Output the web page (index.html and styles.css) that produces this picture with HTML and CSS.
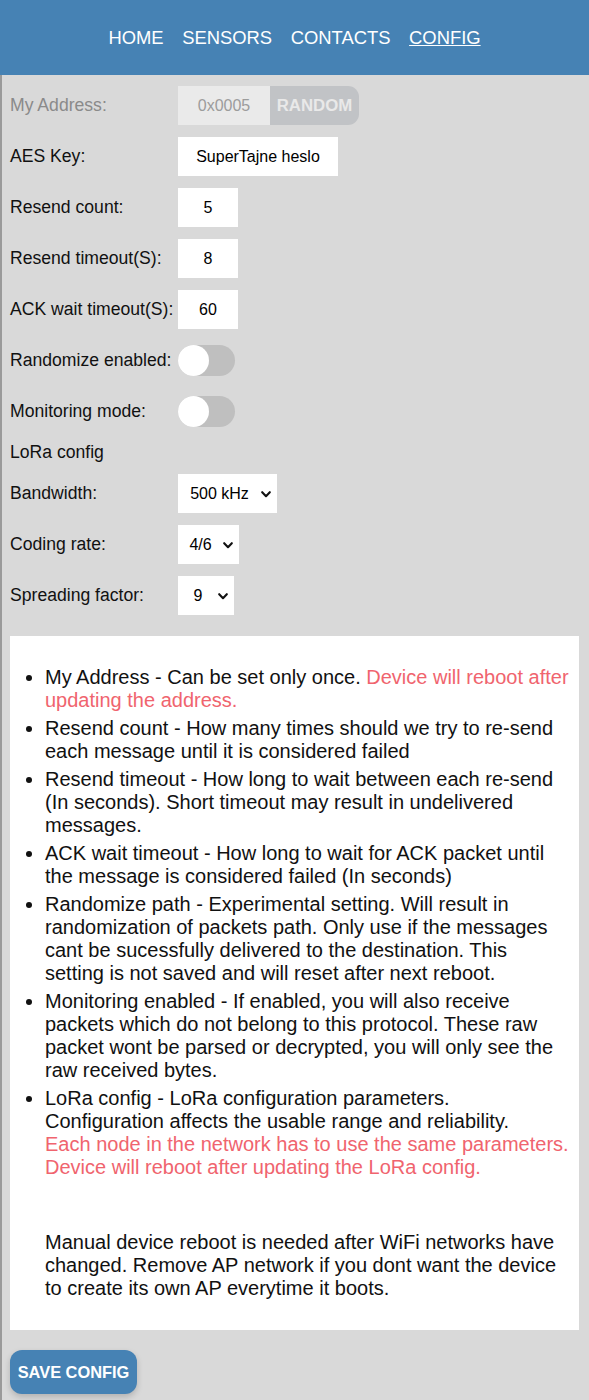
FILE: index.html
```html
<!DOCTYPE html>
<html lang="en">
<head>
<meta charset="utf-8">
<title>Config</title>
<link rel="stylesheet" href="styles.css">
</head>
<body>
<header class="topbar">
  <nav class="nav">
    <a class="nav-link" href="#">HOME</a>
    <a class="nav-link" href="#">SENSORS</a>
    <a class="nav-link" href="#">CONTACTS</a>
    <a class="nav-link active" href="#">CONFIG</a>
  </nav>
</header>
<main class="page">
  <form class="config">
    <div class="row">
      <label class="label disabled">My Address:</label>
      <div class="addr-group">
        <input class="field addr" type="text" value="0x0005" disabled>
        <button type="button" class="random-btn" disabled>RANDOM</button>
      </div>
    </div>
    <div class="row">
      <label class="label">AES Key:</label>
      <input class="field aes" type="text" value="SuperTajne heslo">
    </div>
    <div class="row">
      <label class="label">Resend count:</label>
      <input class="field num" type="text" value="5">
    </div>
    <div class="row">
      <label class="label">Resend timeout(S):</label>
      <input class="field num" type="text" value="8">
    </div>
    <div class="row">
      <label class="label">ACK wait timeout(S):</label>
      <input class="field num" type="text" value="60">
    </div>
    <div class="row">
      <label class="label">Randomize enabled:</label>
      <span class="toggle"><span class="knob"></span></span>
    </div>
    <div class="row">
      <label class="label">Monitoring mode:</label>
      <span class="toggle"><span class="knob"></span></span>
    </div>
    <div class="section-title">LoRa config</div>
    <div class="row">
      <label class="label">Bandwidth:</label>
      <span class="select-wrap">
        <select class="select bw">
          <option>125 kHz</option>
          <option>250 kHz</option>
          <option selected>500 kHz</option>
        </select>
        <svg class="chevron" viewBox="0 0 10 7" width="10" height="7" aria-hidden="true"><path d="M1.2 1.2 L5 5.2 L8.8 1.2" fill="none" stroke="#111" stroke-width="2.1" stroke-linecap="round" stroke-linejoin="round"/></svg>
      </span>
    </div>
    <div class="row">
      <label class="label">Coding rate:</label>
      <span class="select-wrap">
        <select class="select cr">
          <option>4/5</option>
          <option selected>4/6</option>
          <option>4/7</option>
          <option>4/8</option>
        </select>
        <svg class="chevron" viewBox="0 0 10 7" width="10" height="7" aria-hidden="true"><path d="M1.2 1.2 L5 5.2 L8.8 1.2" fill="none" stroke="#111" stroke-width="2.1" stroke-linecap="round" stroke-linejoin="round"/></svg>
      </span>
    </div>
    <div class="row">
      <label class="label">Spreading factor:</label>
      <span class="select-wrap">
        <select class="select sf">
          <option>7</option>
          <option>8</option>
          <option selected>9</option>
          <option>10</option>
          <option>11</option>
          <option>12</option>
        </select>
        <svg class="chevron" viewBox="0 0 10 7" width="10" height="7" aria-hidden="true"><path d="M1.2 1.2 L5 5.2 L8.8 1.2" fill="none" stroke="#111" stroke-width="2.1" stroke-linecap="round" stroke-linejoin="round"/></svg>
      </span>
    </div>
  </form>

  <section class="info">
    <ul class="info-list">
      <li>My Address - Can be set only once. <span class="warn">Device will reboot after updating the address.</span></li>
      <li>Resend count - How many times should we try to re-send each message until it is considered failed</li>
      <li>Resend timeout - How long to wait between each re-send (In seconds). Short timeout may result in undelivered messages.</li>
      <li>ACK wait timeout - How long to wait for ACK packet until the message is considered failed (In seconds)</li>
      <li>Randomize path - Experimental setting. Will result in randomization of packets path. Only use if the messages cant be sucessfully delivered to the destination. This setting is not saved and will reset after next reboot.</li>
      <li>Monitoring enabled - If enabled, you will also receive packets which do not belong to this protocol. These raw packet wont be parsed or decrypted, you will only see the raw received bytes.</li>
      <li>LoRa config - LoRa configuration parameters. Configuration affects the usable range and reliability.<br><span class="warn">Each node in the network has to use the same parameters. Device will reboot after updating the LoRa config.</span></li>
    </ul>
    <p class="note">Manual device reboot is needed after WiFi networks have changed. Remove AP network if you dont want the device to create its own AP everytime it boots.</p>
  </section>

  <button type="button" class="save-btn">SAVE CONFIG</button>
</main>
</body>
</html>
```
FILE: styles.css
```css
* { box-sizing: border-box; }

html, body {
  margin: 0;
  padding: 0;
}

body {
  background: #d9d9d9;
  font-family: "Liberation Sans", Arial, sans-serif;
  color: #111;
  min-height: 1400px;
}

.topbar {
  background: #4682b4;
  height: 75px;
  padding-top: 27px;
}

.nav {
  display: flex;
  justify-content: center;
  gap: 18.6px;
  font-size: 18.4px;
  line-height: 21px;
}

.nav-link {
  color: #fff;
  text-decoration: none;
}

.nav-link.active {
  text-decoration: underline;
}

.page {
  border-left: 2px solid #9a9a9a;
  padding: 11px 10px 7px 8px;
  min-height: 1325px;
}

.config {
  display: flex;
  flex-direction: column;
  gap: 12px;
}

.row {
  display: flex;
  align-items: center;
  min-height: 39px;
}

.label {
  width: 168px;
  flex: none;
  font-size: 17.6px;
  color: #111;
}

.label.disabled {
  color: #8a8a8a;
}

.section-title {
  font-size: 17.6px;
  height: 19px;
  line-height: 19px;
}

.field {
  border: none;
  outline: none;
  height: 39px;
  padding: 0;
  font-family: "Liberation Sans", Arial, sans-serif;
  font-size: 16px;
  color: #000;
  background: #fff;
  text-align: center;
}

.addr-group {
  display: flex;
}

.field.addr {
  width: 92px;
  background: #eaeaea;
  color: #9c9c9c;
}

.random-btn {
  border: none;
  height: 39px;
  width: 89px;
  padding: 0;
  background: #c1c3c6;
  color: #e9e9e9;
  font-family: "Liberation Sans", Arial, sans-serif;
  font-weight: bold;
  font-size: 16.8px;
  border-radius: 0 11px 11px 0;
}

.field.aes { width: 160px; }
.field.num { width: 60px; }

.toggle {
  width: 57px;
  height: 31px;
  border-radius: 16px;
  background: #bfbfbf;
  display: flex;
  align-items: center;
}

.knob {
  width: 31px;
  height: 31px;
  border-radius: 50%;
  background: #fff;
}

.select-wrap {
  position: relative;
  display: inline-flex;
}

.select {
  -webkit-appearance: none;
  appearance: none;
  border: none;
  outline: none;
  height: 39px;
  background: #fff;
  color: #000;
  font-family: "Liberation Sans", Arial, sans-serif;
  font-size: 16px;
  text-align-last: center;
  padding: 0 16px 0 0;
  border-radius: 0;
}

.chevron {
  position: absolute;
  right: 6px;
  top: 17px;
  pointer-events: none;
}

.select.bw { width: 99px; }
.select.cr { width: 61px; }
.select.sf { width: 56px; }

.info {
  margin-top: 21px;
  background: #fff;
  padding: 10px 9.5px 10px 10px;
  font-size: 20px;
  color: #111;
}

.info-list {
  margin: 20px 0 0;
  padding-left: 25px;
}

.info-list li {
  margin-bottom: 5px;
}

.info-list li:last-child {
  margin-bottom: 0;
}

.warn {
  color: #f0646e;
}

.note {
  margin: 52px 0 20px 25px;
}

.save-btn {
  margin-top: 20px;
  width: 127px;
  height: 44px;
  border: none;
  border-radius: 12px;
  background: #4682b4;
  color: #fff;
  font-family: "Liberation Sans", Arial, sans-serif;
  font-weight: bold;
  font-size: 16.4px;
  padding: 0;
  box-shadow: 0 3px 6px rgba(0, 0, 0, 0.18);
}
```
